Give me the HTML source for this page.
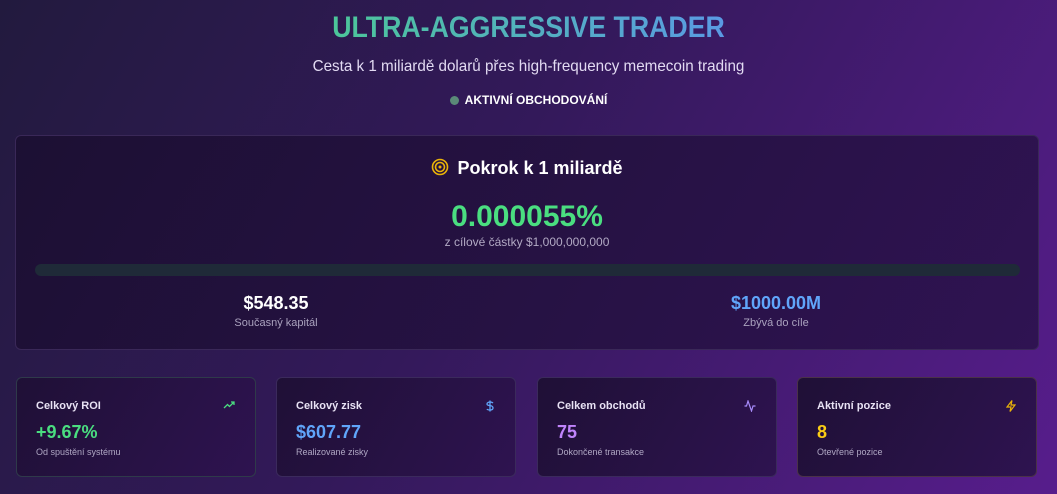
<!DOCTYPE html>
<html><head><meta charset="utf-8"><style>
*{margin:0;padding:0;box-sizing:border-box}
body{width:1057px;height:494px;overflow:hidden;font-family:"Liberation Sans","DejaVu Sans",sans-serif;background:linear-gradient(120deg,#221a3e 0%,#33195a 45%,#571d8c 100%);position:relative;color:#fff}
.abs{position:absolute}
h1{position:absolute;top:11px;left:0;width:1057px;text-align:center;font-size:30px;font-weight:bold;transform:scaleX(0.89)}
h1 span{background:linear-gradient(90deg,#4cc69a,#5a9ae4);-webkit-background-clip:text;background-clip:text;color:transparent}
.sub{top:58px;width:1057px;text-align:center;font-size:16px;color:#e2daf2;transform:scaleX(0.95)}
.st{top:93px;width:1057px;text-align:center;font-size:12px;font-weight:bold}
.st i{display:inline-block;width:9px;height:9px;border-radius:50%;background:#5a8a78;margin-right:6px;vertical-align:-1px}
.main{left:15px;top:135px;width:1024px;height:215px;border:1px solid #3a2858;border-radius:6px;background:linear-gradient(120deg,#1c1033,#2f1352)}
.c{text-align:center;position:absolute}
.card{position:absolute;top:377px;width:240px;height:100px;border-radius:6px;background:linear-gradient(120deg,#1f1036,#2e1350);border:1px solid #3b2a5c}
.card .l{position:absolute;left:19px;top:22px;font-size:11px;font-weight:bold;color:#e8e2f4}
.card .v{position:absolute;left:19px;top:44px;font-size:18px;font-weight:bold}
.card .s{position:absolute;left:19px;top:69px;font-size:9px;color:#b0a8c4}
.card svg{position:absolute;right:20px;top:22px}
</style></head><body>
<h1><span>ULTRA-AGGRESSIVE TRADER</span></h1>
<div class="abs sub">Cesta k 1 miliardě dolarů přes high-frequency memecoin trading</div>
<div class="abs st"><i></i>AKTIVNÍ OBCHODOVÁNÍ</div>
<div class="abs main">
 <div class="c" style="left:0;width:1022px;top:22px;font-size:18px;font-weight:bold"><svg width="18" height="18" viewBox="0 0 18 18" style="vertical-align:-2px;margin-right:8px"><circle cx="9" cy="9" r="7.5" fill="none" stroke="#eab308" stroke-width="1.6"/><circle cx="9" cy="9" r="4.5" fill="none" stroke="#eab308" stroke-width="1.6"/><circle cx="9" cy="9" r="1.5" fill="#eab308"/></svg>Pokrok k 1 miliardě</div>
 <div class="c" style="left:0;width:1022px;top:64px;font-size:30px;font-weight:bold;color:#4ade80">0.000055%</div>
 <div class="c" style="left:0;width:1022px;top:99px;font-size:12px;color:#b2aac4">z cílové částky $1,000,000,000</div>
 <div class="abs" style="left:19px;top:128px;width:985px;height:12px;border-radius:6px;background:#1f2a38"></div>
 <div class="c" style="left:160px;width:200px;top:157px;font-size:18px;font-weight:bold">$548.35</div>
 <div class="c" style="left:160px;width:200px;top:181px;font-size:11px;color:#aaa2be">Současný kapitál</div>
 <div class="c" style="left:660px;width:200px;top:157px;font-size:18px;font-weight:bold;color:#60a5fa">$1000.00M</div>
 <div class="c" style="left:660px;width:200px;top:181px;font-size:11px;color:#aaa2be">Zbývá do cíle</div>
</div>
<div class="card" style="left:16px;border-color:#2f3a4a"><div class="l">Celkový ROI</div><svg width="12" height="10" viewBox="0 0 12 10"><path d="M1 8L4.5 4.5 6.5 6.5 11 2M8 2H11V5" fill="none" stroke="#4ade80" stroke-width="1.3"/></svg><div class="v" style="color:#4ade80">+9.67%</div><div class="s">Od spuštění systému</div></div>
<div class="card" style="left:276px"><div class="l">Celkový zisk</div><svg width="10" height="12" viewBox="0 0 10 12"><path d="M5 0.5V11.5M8 3C7 2 6 2 5 2S2 2.5 2 4 5 5.5 5 5.5 8 6 8 8 6 10 5 10 2.5 10 2 9" fill="none" stroke="#60a5fa" stroke-width="1.3"/></svg><div class="v" style="color:#60a5fa">$607.77</div><div class="s">Realizované zisky</div></div>
<div class="card" style="left:537px"><div class="l">Celkem obchodů</div><svg width="12" height="12" viewBox="0 0 12 12"><path d="M0.5 6H2.5L4 1 7.5 11 9 6H11.5" fill="none" stroke="#a78bfa" stroke-width="1.2"/></svg><div class="v" style="color:#c084fc">75</div><div class="s">Dokončené transakce</div></div>
<div class="card" style="left:797px;border-color:#4a3248"><div class="l">Aktivní pozice</div><svg width="10" height="12" viewBox="0 0 10 12"><path d="M6 0.5L1 7H5L4 11.5 9 5H5Z" fill="none" stroke="#eab308" stroke-width="1.2"/></svg><div class="v" style="color:#facc15">8</div><div class="s">Otevřené pozice</div></div>
</body></html>
